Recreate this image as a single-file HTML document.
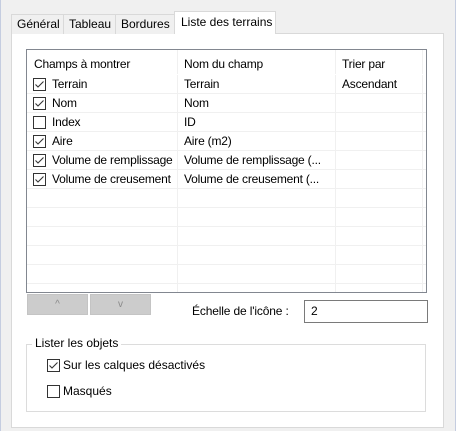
<!DOCTYPE html>
<html><head><meta charset="utf-8"><style>
*{margin:0;padding:0;box-sizing:border-box}
body{width:456px;height:431px;background:#f0f0f0;position:relative;overflow:hidden;font-family:"Liberation Sans",sans-serif;font-size:12px;color:#000}
.a{position:absolute}
.vl{position:absolute;top:0;bottom:0;width:1px;background:#c5cde0}
.tab{position:absolute;top:14px;height:20px;background:#f0f0f0;border:1px solid #d9d9d9;border-bottom:none;padding:2px 0 0 5px;white-space:nowrap}
.panel{position:absolute;left:11px;top:33px;width:433px;height:395px;background:#fff;border:1px solid #d9d9d9}
.t{position:absolute;left:26px;top:49px;width:401px;height:244px;border:1px solid #828790;background:#fff;overflow:hidden}
.cl{position:absolute;top:0;bottom:0;width:1px;background:#f0f0f0}
.rl{position:absolute;left:0;right:0;height:1px;background:#f0f0f0}
.cell{position:absolute;white-space:nowrap;letter-spacing:-0.2px}
.cb{position:absolute;width:13px;height:13px;border:1px solid #333;background:#fff}
.cb svg{position:absolute;left:0;top:0}
.btn{position:absolute;top:294px;height:21px;background:#cccccc;border:1px solid #c4c4c4;color:#8a8a8a;text-align:center;font-size:10px;line-height:19px}
</style></head><body>
<div class="vl" style="left:0"></div>
<div class="vl" style="left:455px"></div>
<div class="panel"></div>
<div class="tab" style="left:11px;width:53px">Général</div>
<div class="tab" style="left:63px;width:53px">Tableau</div>
<div class="tab" style="left:115px;width:60px">Bordures</div>
<div class="tab" style="left:174px;top:11px;height:23px;width:102px;background:#fff;padding:3px 0 0 6px;z-index:2">Liste des terrains</div>
<div class="t">
<div class="cl" style="left:150px"></div>
<div class="cl" style="left:308px"></div>
<div class="cl" style="left:395px"></div>
<div class="rl" style="top:24px;background:#fff"></div>
<div class="rl" style="top:43px"></div><div class="rl" style="top:62px"></div><div class="rl" style="top:81px"></div><div class="rl" style="top:100px"></div><div class="rl" style="top:119px"></div><div class="rl" style="top:138px"></div><div class="rl" style="top:157px"></div><div class="rl" style="top:176px"></div><div class="rl" style="top:195px"></div><div class="rl" style="top:214px"></div><div class="rl" style="top:233px"></div>
<div class="cell" style="left:7px;top:7px">Champs à montrer</div>
<div class="cell" style="left:157px;top:7px">Nom du champ</div>
<div class="cell" style="left:315px;top:7px">Trier par</div>
<div class="cell" style="left:25px;top:27px">Terrain</div><div class="cell" style="left:157px;top:27px">Terrain</div><div class="cell" style="left:315px;top:27px">Ascendant</div>
<div class="cell" style="left:25px;top:46px">Nom</div><div class="cell" style="left:157px;top:46px">Nom</div>
<div class="cell" style="left:25px;top:65px">Index</div><div class="cell" style="left:157px;top:65px">ID</div>
<div class="cell" style="left:25px;top:84px">Aire</div><div class="cell" style="left:157px;top:84px">Aire (m2)</div>
<div class="cell" style="left:25px;top:103px">Volume de remplissage</div><div class="cell" style="left:157px;top:103px">Volume de remplissage (...</div>
<div class="cell" style="left:25px;top:122px">Volume de creusement</div><div class="cell" style="left:157px;top:122px">Volume de creusement (...</div>
<div class="cb" style="left:6px;top:28px"><svg width="11" height="11"><path d="M1.5 5.5 L4 8 L9.5 2.5" stroke="#333" stroke-width="1.1" fill="none"/></svg></div>
<div class="cb" style="left:6px;top:47px"><svg width="11" height="11"><path d="M1.5 5.5 L4 8 L9.5 2.5" stroke="#333" stroke-width="1.1" fill="none"/></svg></div>
<div class="cb" style="left:6px;top:66px"></div>
<div class="cb" style="left:6px;top:85px"><svg width="11" height="11"><path d="M1.5 5.5 L4 8 L9.5 2.5" stroke="#333" stroke-width="1.1" fill="none"/></svg></div>
<div class="cb" style="left:6px;top:104px"><svg width="11" height="11"><path d="M1.5 5.5 L4 8 L9.5 2.5" stroke="#333" stroke-width="1.1" fill="none"/></svg></div>
<div class="cb" style="left:6px;top:123px"><svg width="11" height="11"><path d="M1.5 5.5 L4 8 L9.5 2.5" stroke="#333" stroke-width="1.1" fill="none"/></svg></div>
</div>
<div class="btn" style="left:27px;width:61px">^</div>
<div class="btn" style="left:90px;width:61px">v</div>
<div class="a" style="left:192px;top:304px;letter-spacing:-0.15px">Échelle de l'icône :</div>
<div class="a" style="left:304px;top:300px;width:124px;height:23px;border:1px solid #7a7a7a;background:#fff;padding:3px 0 0 6px">2</div>
<div class="a" style="left:26px;top:344px;width:400px;height:68px;border:1px solid #dcdcdc"></div>
<div class="a" style="left:32px;top:336px;background:#fff;padding:0 3px">Lister les objets</div>
<div class="cb" style="left:47px;top:359px"><svg width="11" height="11"><path d="M1.5 5.5 L4 8 L9.5 2.5" stroke="#333" stroke-width="1.1" fill="none"/></svg></div>
<div class="a" style="left:63px;top:358px">Sur les calques désactivés</div>
<div class="cb" style="left:47px;top:385px"></div>
<div class="a" style="left:63px;top:384px">Masqués</div>
</body></html>
